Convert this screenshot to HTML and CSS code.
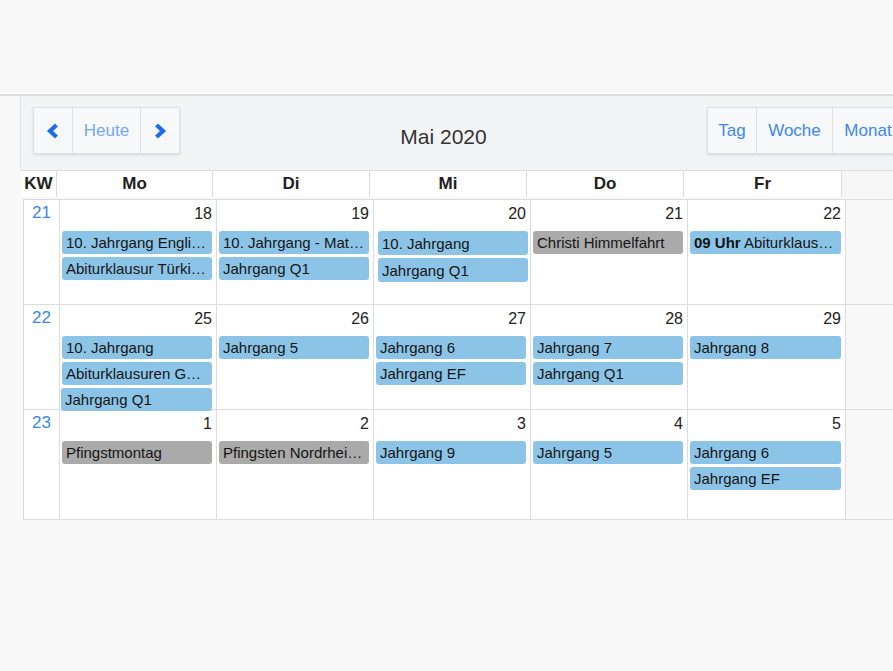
FILE: index.html
```html
<!DOCTYPE html>
<html lang="de">
<head>
<meta charset="utf-8">
<title>Kalender</title>
<link rel="stylesheet" href="styles.css">
</head>
<body>
<div class="topbar"></div>
<div class="cal">
  <div class="toolbar">
    <div class="btn-group">
      <button class="btn btn-nav" aria-label="Zurück"><svg width="16" height="16" viewBox="0 0 16 16"><polyline points="11.5,2 5,8 11.5,14" fill="none" stroke="#1a6fe8" stroke-width="4.2" stroke-linejoin="miter" stroke-linecap="butt"/></svg></button>
      <button class="btn btn-today">Heute</button>
      <button class="btn btn-nav" aria-label="Weiter"><svg width="16" height="16" viewBox="0 0 16 16"><polyline points="4.5,2 11,8 4.5,14" fill="none" stroke="#1a6fe8" stroke-width="4.2" stroke-linejoin="miter" stroke-linecap="butt"/></svg></button>
    </div>
    <h2 class="title">Mai 2020</h2>
    <div class="btn-group">
      <button class="btn btn-tag">Tag</button>
      <button class="btn btn-woche">Woche</button>
      <button class="btn btn-monat">Monat</button>
    </div>
  </div>

  <div class="head">
    <div class="hcell">KW</div>
    <div class="hcell">Mo</div>
    <div class="hcell">Di</div>
    <div class="hcell">Mi</div>
    <div class="hcell">Do</div>
    <div class="hcell">Fr</div>
    <div class="hcell hrest"></div>
  </div>

  <div class="grid">
    <div class="week">
      <div class="kw">21</div>
      <div class="day"><div class="num">18</div>
        <div class="ev">10. Jahrgang Englisch</div>
        <div class="ev">Abiturklausur Türkisch</div>
      </div>
      <div class="day"><div class="num">19</div>
        <div class="ev">10. Jahrgang - Mathematik</div>
        <div class="ev">Jahrgang Q1</div>
      </div>
      <div class="day"><div class="num">20</div>
        <div class="ev ev-shift ev-first-low">10. Jahrgang</div>
        <div class="ev ev-shift">Jahrgang Q1</div>
      </div>
      <div class="day"><div class="num">21</div>
        <div class="ev ev-gray">Christi Himmelfahrt</div>
      </div>
      <div class="day"><div class="num">22</div>
        <div class="ev"><b>09 Uhr</b> Abiturklausur Deutsch</div>
      </div>
      <div class="day rest"></div>
    </div>

    <div class="week week-over">
      <div class="kw">22</div>
      <div class="day"><div class="num">25</div>
        <div class="ev">10. Jahrgang</div>
        <div class="ev">Abiturklausuren Geschichte</div>
        <div class="ev ev-left">Jahrgang Q1</div>
      </div>
      <div class="day"><div class="num">26</div>
        <div class="ev">Jahrgang 5</div>
      </div>
      <div class="day"><div class="num">27</div>
        <div class="ev">Jahrgang 6</div>
        <div class="ev">Jahrgang EF</div>
      </div>
      <div class="day"><div class="num">28</div>
        <div class="ev">Jahrgang 7</div>
        <div class="ev">Jahrgang Q1</div>
      </div>
      <div class="day"><div class="num">29</div>
        <div class="ev">Jahrgang 8</div>
      </div>
      <div class="day rest"></div>
    </div>

    <div class="week week-last">
      <div class="kw">23</div>
      <div class="day"><div class="num">1</div>
        <div class="ev ev-gray">Pfingstmontag</div>
      </div>
      <div class="day"><div class="num">2</div>
        <div class="ev ev-gray">Pfingsten Nordrhein-Westfalen</div>
      </div>
      <div class="day"><div class="num">3</div>
        <div class="ev">Jahrgang 9</div>
      </div>
      <div class="day"><div class="num">4</div>
        <div class="ev">Jahrgang 5</div>
      </div>
      <div class="day"><div class="num">5</div>
        <div class="ev">Jahrgang 6</div>
        <div class="ev">Jahrgang EF</div>
      </div>
      <div class="day rest"></div>
    </div>
  </div>
</div>
</body>
</html>
```

FILE: styles.css
```css
* { box-sizing: border-box; }

html, body {
  margin: 0;
  padding: 0;
  overflow: hidden;
  background: #f8f8f8;
  font-family: "Liberation Sans", Arial, sans-serif;
  color: #222;
}

.topbar {
  height: 96px;
  background: #f8f8f8;
  border-bottom: 2px solid #dedede;
  box-shadow: inset 0 -1px 0 #ffffff;
}

.cal {
  margin-left: 20px;
  width: 896px;
}

.toolbar {
  height: 74px;
  background: #f3f4f6;
  border-left: 1px solid #e2e2e2;
  padding: 11px 12px 0 12px;
  display: flex;
  justify-content: space-between;
  align-items: flex-start;
}

.btn-group {
  display: flex;
  box-shadow: 0 1px 3px rgba(0, 0, 0, 0.12);
  border-radius: 2px;
}

.btn {
  height: 47px;
  margin: 0;
  padding: 0;
  background: #f7f8fa;
  border: 1px solid #dcdfe3;
  font-family: "Liberation Sans", Arial, sans-serif;
  font-size: 17px;
  color: #3d87f0;
  display: flex;
  align-items: center;
  justify-content: center;
  cursor: pointer;
}

.btn + .btn { margin-left: -1px; }

.btn-nav { width: 40px; }
.btn-nav svg { display: block; }
.btn-today { width: 69px; color: #74a8ef; }
.btn-tag { width: 50px; }
.btn-woche { width: 77px; }
.btn-monat { width: 72px; }

.title {
  margin: 17px 0 0 0;
  font-size: 21px;
  font-weight: normal;
  line-height: 26px;
  color: #333;
}

.head {
  margin-left: 1px;
  display: grid;
  grid-template-columns: 36px 156px 157px 157px 157px 158px 1fr;
  border-top: 1px solid #dcdcdc;
  height: 27px;
}

.hcell {
  background: #ffffff;
  border-right: 1px solid #dcdcdc;
  text-align: center;
  font-weight: bold;
  font-size: 17px;
  line-height: 26px;
  color: #1e1e1e;
}

.hrest { background: #f6f6f7; border-right: none; }

.grid {
  margin-left: 3px;
  margin-top: 2px;
  border-top: 1px solid #dcdcdc;
  border-left: 1px solid #dcdcdc;
}

.week {
  display: grid;
  grid-template-columns: 36px 157px 157px 157px 157px 158px 1fr;
  grid-template-rows: minmax(0, 1fr);
  height: 105px;
  border-bottom: 1px solid #dcdcdc;
}

.week-over { position: relative; z-index: 1; }

.week-last { height: 110px; }

.kw {
  background: #ffffff;
  border-right: 1px solid #dcdcdc;
  text-align: center;
  color: #3c86e8;
  font-size: 17px;
  line-height: 22px;
  padding-top: 2px;
}

.day {
  background: #ffffff;
  border-right: 1px solid #dcdcdc;
  padding-top: 3px;
  min-width: 0;
  min-height: 0;
}

.day.rest { background: #f8f8f8; border-right: none; }

.num {
  text-align: right;
  font-size: 16px;
  line-height: 21px;
  padding-right: 4px;
  margin-bottom: 7px;
  color: #222;
}

.ev {
  height: 23px;
  line-height: 24px;
  margin: 0 4px 3px 2px;
  padding: 0 4px;
  background: #8cc4e8;
  border-radius: 3px;
  font-size: 15px;
  color: #141414;
  white-space: nowrap;
  overflow: hidden;
  text-overflow: ellipsis;
}

.ev b { font-weight: bold; }

.ev-gray { background: #aaaaaa; }

.ev-shift { margin-left: 4px; margin-right: 2px; height: 24px; line-height: 25px; }
.ev-first-low { margin-top: 2px; }

.ev-left { margin-left: 1px; margin-right: 4px; }
```
